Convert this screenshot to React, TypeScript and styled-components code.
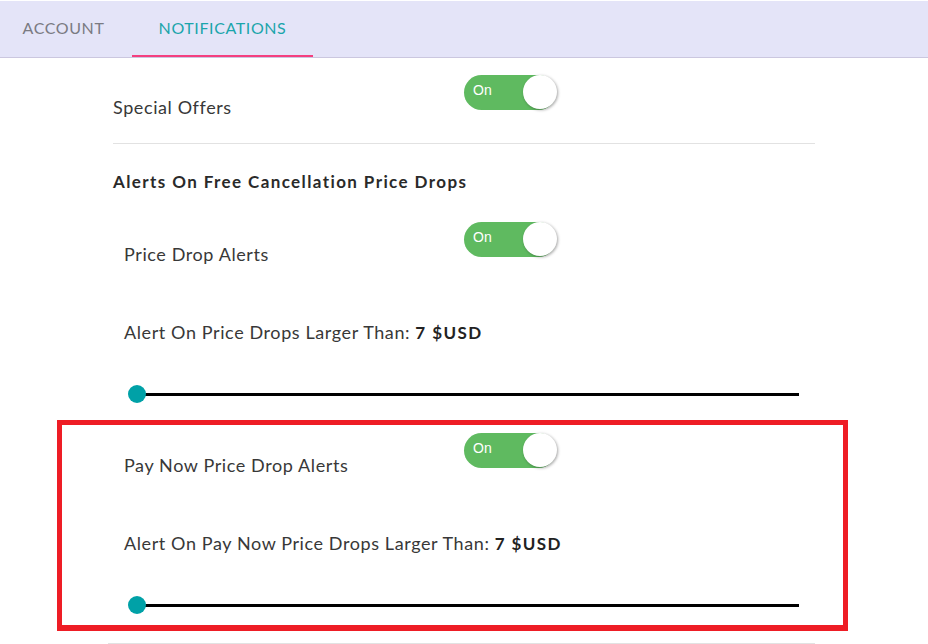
import React from "react";
import styled, { createGlobalStyle } from "styled-components";

const Global = createGlobalStyle`
  html, body { margin: 0; padding: 0; background: #fff; }
  body { font-family: Lato, "Noto Sans", sans-serif; color: #333; }
`;

const Page = styled.div`
  width: 928px;
  padding-top: 1px;
`;

const TabBar = styled.div`
  display: flex;
  height: 56px;
  background: #e4e4f8;
  border-bottom: 1px solid #cbc7df;
`;

const Tab = styled.div<{ $active?: boolean; $w: number; $gap?: number }>`
  box-sizing: border-box;
  width: ${(p) => p.$w}px;
  margin-right: ${(p) => p.$gap ?? 0}px;
  display: flex;
  align-items: center;
  justify-content: center;
  padding-bottom: 2px;
  font-size: 16px;
  letter-spacing: 0.6px;
  color: ${(p) => (p.$active ? "#1ba5ab" : "#7a7a82")};
  border-bottom: 2px solid ${(p) => (p.$active ? "#f43f7f" : "transparent")};
  text-transform: uppercase;
`;

const Column = styled.div`
  width: 702px;
  margin: 0 auto;
`;

const ToggleRow = styled.div<{ $top: number }>`
  display: grid;
  grid-template-columns: 351px 1fr;
  align-items: start;
  margin-top: ${(p) => p.$top}px;
`;

const Label = styled.div<{ $indent?: boolean }>`
  padding-top: 20px;
  padding-left: ${(p) => (p.$indent ? 11 : 0)}px;
  font-size: 18px;
  letter-spacing: 0.6px;
  line-height: 24px;
  color: #383838;
`;

const Switch = styled.div`
  position: relative;
  width: 92px;
  height: 35px;
  border-radius: 18px;
  background: #5fba60;
  display: flex;
  align-items: center;
`;

const SwitchText = styled.span`
  font-family: "Liberation Sans", Arial, sans-serif;
  font-size: 14px;
  color: #fff;
  margin-left: 9px;
  margin-top: -5px;
`;

const Knob = styled.span`
  position: absolute;
  top: 0;
  right: -1px;
  width: 34px;
  height: 34px;
  border-radius: 50%;
  background: #fff;
  box-shadow: 1px 1px 3px rgba(0, 0, 0, 0.35);
`;

const Divider = styled.hr<{ $top: number; $left?: number }>`
  border: 0;
  height: 1px;
  background: #e2e2e2;
  margin: ${(p) => p.$top}px 0 0 ${(p) => p.$left ?? 0}px;
`;

const Heading = styled.div`
  margin-top: 26px;
  font-size: 17px;
  font-weight: 700;
  line-height: 24px;
  color: #2a2a2a;
  letter-spacing: 1.4px;
`;

const AmountLabel = styled.div`
  margin-top: 54px;
  padding-left: 11px;
  font-size: 18px;
  letter-spacing: 0.6px;
  line-height: 24px;
  color: #383838;
  b {
    font-size: 17px;
    font-weight: 700;
    letter-spacing: 1.4px;
    color: #222;
  }
`;

const SliderRoot = styled.div`
  position: relative;
  height: 18px;
  margin: 40px 16px 0 15px;
  display: flex;
  align-items: center;
`;

const Track = styled.div`
  flex: 1;
  height: 3px;
  margin-left: 9px;
  background: #000;
`;

const Thumb = styled.span`
  position: absolute;
  left: 0;
  top: 0;
  width: 18px;
  height: 18px;
  border-radius: 50%;
  background: #00a1a7;
`;

const Highlight = styled.section`
  margin: 17px -33px 0 -56px;
  padding: 8px 28px 11px 51px;
  border: 5px solid #ee1d25;
  border-bottom-width: 6px;
`;

const Toggle = () => (
  <Switch>
    <SwitchText>On</SwitchText>
    <Knob />
  </Switch>
);

const Slider = () => (
  <SliderRoot>
    <Track />
    <Thumb />
  </SliderRoot>
);

export default function App() {
  return (
    <Page>
      <Global />
      <TabBar>
        <Tab $w={127} $gap={5}>Account</Tab>
        <Tab $w={181} $active>
          Notifications
        </Tab>
      </TabBar>
      <Column>
        <ToggleRow $top={17}>
          <Label>Special Offers</Label>
          <Toggle />
        </ToggleRow>
        <Divider $top={24} />
        <Heading>Alerts On Free Cancellation Price Drops</Heading>
        <ToggleRow $top={28}>
          <Label $indent>Price Drop Alerts</Label>
          <Toggle />
        </ToggleRow>
        <AmountLabel>
          Alert On Price Drops Larger Than: <b>7 $USD</b>
        </AmountLabel>
        <Slider />
        <Highlight>
          <ToggleRow $top={0}>
            <Label $indent>Pay Now Price Drop Alerts</Label>
            <Toggle />
          </ToggleRow>
          <AmountLabel>
            Alert On Pay Now Price Drops Larger Than: <b>7 $USD</b>
          </AmountLabel>
          <Slider />
        </Highlight>
        <Divider $top={12} $left={-5} />
      </Column>
    </Page>
  );
}
